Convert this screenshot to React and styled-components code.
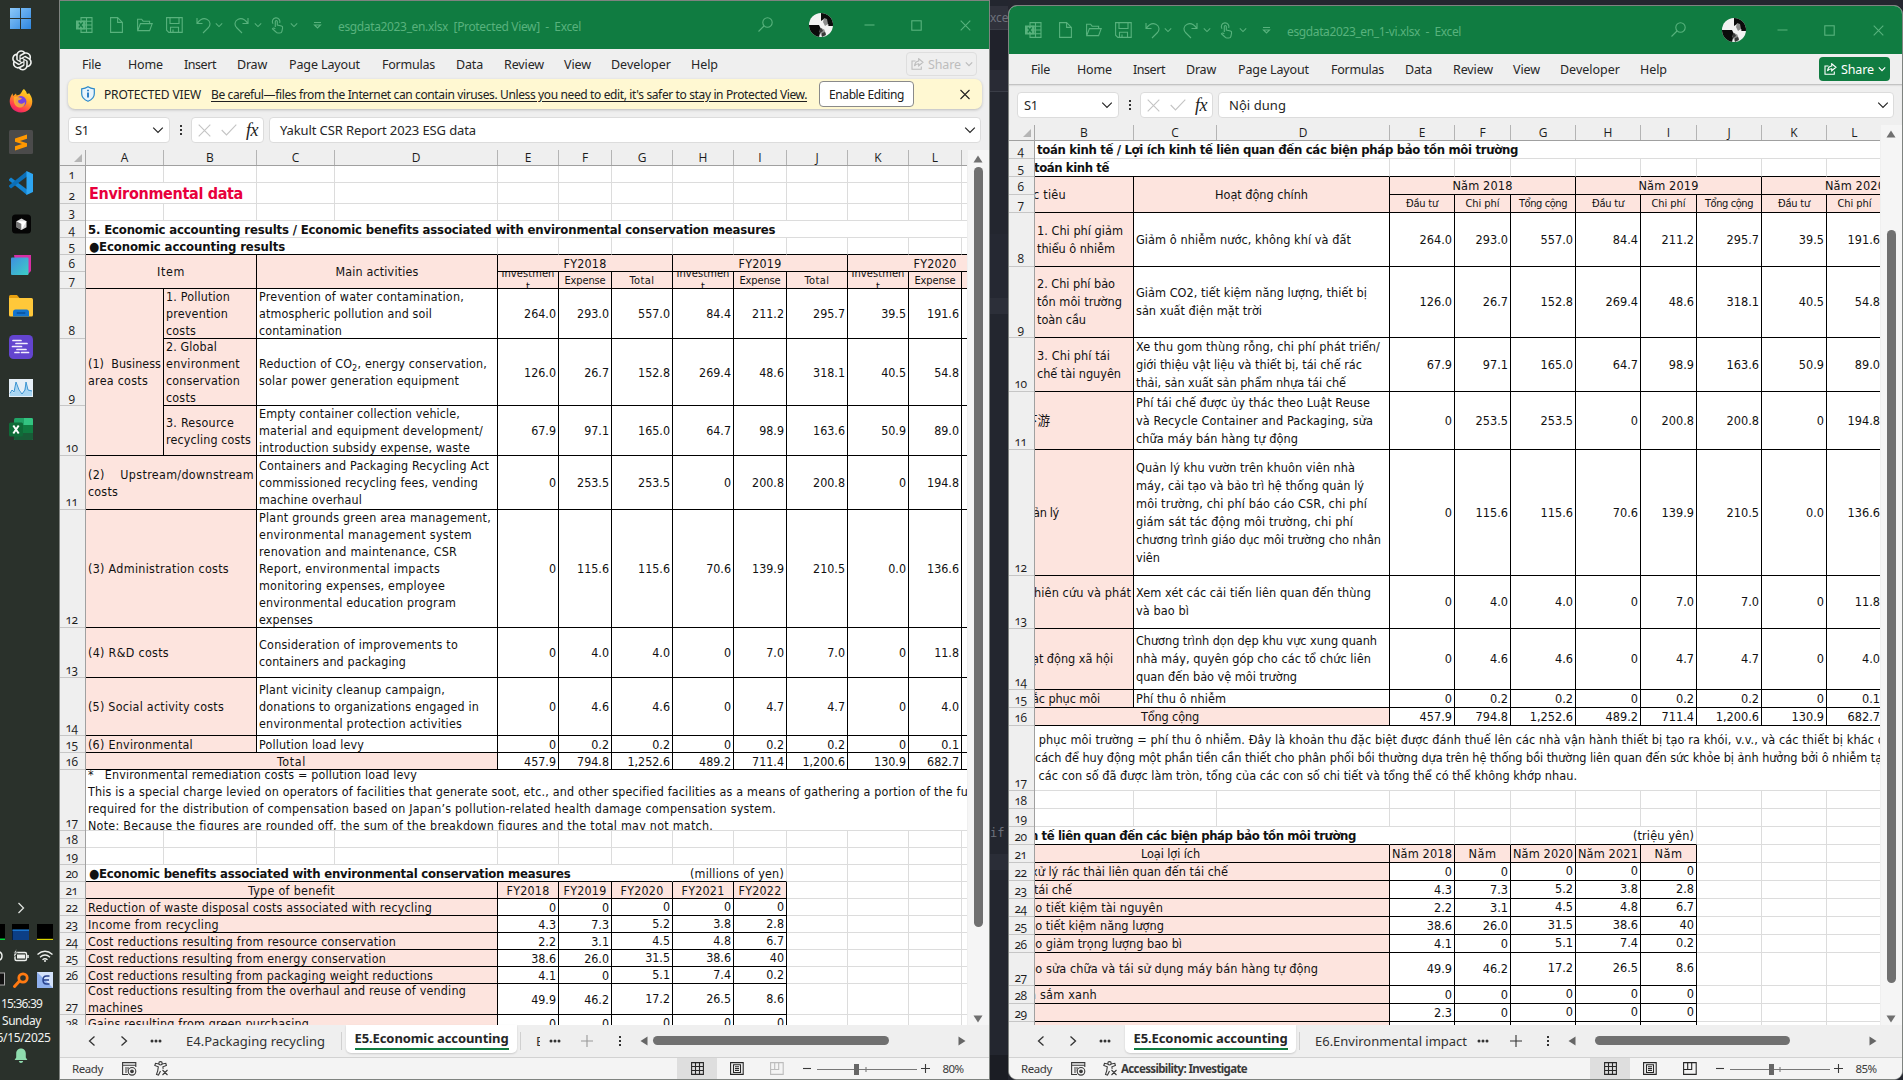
import React, { useLayoutEffect, useRef } from "react";
import styled, { createGlobalStyle, css } from "styled-components";
import { AiOutlineOpenAI } from "react-icons/ai";

const UI = '"Noto Sans", "Open Sans", sans-serif';
const SHEET = '"DejaVu Sans Condensed", "DejaVu Sans", "Noto Sans", "Noto Sans CJK SC", sans-serif';
const GREEN = "#107c41";
const PINK = "#fde4de";

const Global = createGlobalStyle`
  * { box-sizing: border-box; }
  html, body { margin: 0; padding: 0; overflow: hidden; background: #24262f; }
`;

/* ---------- Text that is tracked to a given width ---------- */
const FitSpan = styled.span`
  display: inline-block;
  white-space: pre;
  flex: none;
  text-decoration: inherit;
  text-underline-offset: inherit;
`;
function Fit({ w, children }) {
  const ref = useRef(null);
  useLayoutEffect(() => {
    const el = ref.current;
    if (!w || !el) return;
    el.style.letterSpacing = "0px";
    const n = el.textContent.length;
    const natural = el.getBoundingClientRect().width;
    const gap = (w - natural) / n;
    el.style.letterSpacing = `${gap.toFixed(3)}px`;
  }, [w, children]);
  return <FitSpan ref={ref}>{children}</FitSpan>;
}

/* ---------- Desktop ---------- */
const Desktop = styled.div`
  width: 1903px;
  height: 1080px;
  display: grid;
  grid-template-columns: 59px 931px 18px 895px;
  background: #24262f;
  overflow: hidden;
  font-family: ${UI};
`;

/* ---------- Taskbar ---------- */
const Taskbar = styled.aside`
  background: #2a312b;
  display: flex;
  flex-direction: column;
  justify-content: space-between;
  overflow: hidden;
`;
const Apps = styled.div`
  display: grid;
  grid-auto-rows: 40.95px;
  padding-left: 9px;
  margin-top: -1px;
`;
const AppSlot = styled.div`
  display: flex;
  align-items: center;
  width: 24px;
  svg { display: block; flex: none; }
`;
const Tray = styled.div`
  display: flex;
  flex-direction: column;
  height: 190px;
  color: #f1f3f1;
`;
const TrayRow = styled.div`
  height: ${(p) => p.$h}px;
  display: flex;
  align-items: center;
  justify-content: ${(p) => (p.$center ? "center" : "flex-start")};
  padding-right: ${(p) => (p.$center ? 17 : 0)}px;
  svg { display: block; flex: none; }
`;
const ClockLine = styled.div`
  height: 17px;
  line-height: 17px;
  font-size: 12px;
  display: flex;
  justify-content: center;
  width: ${(p) => p.$w || 43}px;
  white-space: nowrap;
`;

function AppIcons() {
  return (
    <Apps>
      <AppSlot>
        <svg width="24" height="24" viewBox="0 0 24 24">
          <defs>
            <linearGradient id="win" x1="0" y1="0" x2="1" y2="1">
              <stop offset="0" stopColor="#8cc9fa" />
              <stop offset="1" stopColor="#2e86e0" />
            </linearGradient>
          </defs>
          <path fill="url(#win)" d="M1 1h10v10H1zM12 1h10v10H12zM1 12h10v10H1zM12 12h10v10H12z" />
        </svg>
      </AppSlot>
      <AppSlot>
        <AiOutlineOpenAI size={26} color="#f2f4f2" />
      </AppSlot>
      <AppSlot>
        <svg width="24" height="24" viewBox="0 0 24 24">
          <defs>
            <linearGradient id="fox" x1="0.8" y1="0" x2="0.3" y2="1">
              <stop offset="0" stopColor="#ffe226" />
              <stop offset="0.45" stopColor="#ff9a1f" />
              <stop offset="0.8" stopColor="#ff3b50" />
              <stop offset="1" stopColor="#e3206e" />
            </linearGradient>
          </defs>
          <path
            fill="url(#fox)"
            d="M15 0c2 2 2.500 3.300 3 5 1-.2 1.500-.2 2-1 2 2.500 3.300 5 3.300 8.500C23.300 19 18.500 23.500 12 23.500S.7 18.500.7 12.300C.7 9 2 6.500 3.600 4.200L4 7l3-2.500.6 2C10 6 11 5.500 12 4c1-1.500 1.500-3 3-4z"
          />
          <circle cx="12" cy="12.500" r="5.400" fill="#7542e5" />
          <path fill="#ffb02e" d="M5 8c3-1 5 .5 8 1-1 2-3 2-4 2.500C9 15 13 16 16 13c0 4-3 6-6 5.500C6 18 4 13 5 8z" opacity="0.85" />
        </svg>
      </AppSlot>
      <AppSlot>
        <svg width="24" height="24" viewBox="0 0 24 24">
          <rect width="24" height="24" rx="1.500" fill="#4b4b4b" />
          <path fill="#ff9800" d="M6 8.500 18 4.500v4.200L11 11l7 2.200v3.300L6 20.500v-4.200L13 14l-7-2.300z" />
        </svg>
      </AppSlot>
      <AppSlot>
        <svg width="24" height="24" viewBox="0 0 24 24">
          <path fill="#1384d2" d="M0 8.300 2 6.600 18 18.500V24L0 9.500z" />
          <path fill="#0b6fb8" d="M0 15.700 2 17.400 18 5.500V0L0 14.500z" />
          <path fill="#2ea6f2" d="M17.500 0 24 3v18l-6.500 3z" />
        </svg>
      </AppSlot>
      <AppSlot>
        <svg width="24" height="24" viewBox="0 0 24 24">
          <rect x="3" y="2.500" width="19" height="19" rx="3.500" fill="#050505" />
          <path fill="#d8d8d8" d="m12.500 6.500 5 2.700v6l-5 2.800-5-2.800v-6z" />
          <path fill="#777" d="m7.500 9.200 5 2.600V18l-5-2.800z" />
          <path fill="#fff" d="m17.500 9.200-5 8.800v-6.200l-5-2.600z" />
        </svg>
      </AppSlot>
      <AppSlot>
        <svg width="24" height="24" viewBox="0 0 24 24">
          <defs>
            <linearGradient id="cube" x1="0" y1="0" x2="1" y2="1">
              <stop offset="0" stopColor="#3f8fe0" />
              <stop offset="1" stopColor="#3ccfc6" />
            </linearGradient>
          </defs>
          <path fill="#d62fa5" d="M5 2h17v16l-3 3H8z" />
          <rect x="2" y="4.500" width="17.500" height="17.500" rx="1" fill="url(#cube)" />
        </svg>
      </AppSlot>
      <AppSlot>
        <svg width="24" height="24" viewBox="0 0 24 24">
          <path fill="#e8a010" d="M0 2.500Q0 1 1.500 1H8l2.500 3H0z" />
          <path fill="#ffc83a" d="M0 4h22.500Q24 4 24 5.500V21q0 1.500-1.500 1.500h-21Q0 22.500 0 21z" />
          <path fill="#1374cf" d="M4 18q0-2.500 2.500-2.500h11q2.500 0 2.500 2.500v4.500H4z" />
          <rect x="7.500" y="18.300" width="9" height="1.400" rx=".7" fill="#0a4f9a" />
        </svg>
      </AppSlot>
      <AppSlot>
        <svg width="24" height="24" viewBox="0 0 24 24">
          <rect width="24" height="24" rx="4.500" fill="#6344cf" />
          <g stroke="#f3eefe" strokeWidth="1.700" strokeLinecap="round">
            <path d="M4 5.500h8M7 8.500h11M3.500 11.500h9M8 14.500h9M6 17.500h4M12.500 17.500h7" />
          </g>
        </svg>
      </AppSlot>
      <AppSlot>
        <svg width="24" height="24" viewBox="0 0 24 24">
          <rect y="3" width="24" height="18" fill="#e6eff7" />
          <path fill="#a8d5f2" d="M1 18 3 15l2 2 2-10 3 8 3 3 2-3 2-8 2 7 4 1v5H1z" />
          <path fill="none" stroke="#3b94d2" strokeWidth="1" d="M1 17.500 3 14l2 2 2-10 3 8 3 4 3-4 1-8 2 8 4 1" />
        </svg>
      </AppSlot>
      <AppSlot>
        <svg width="24" height="24" viewBox="0 0 24 24">
          <rect x="5" y="1" width="19" height="22" rx="1.500" fill="#21a366" />
          <path fill="#33c481" d="M15 1h7.500Q24 1 24 2.500V8h-9z" />
          <path fill="#107c41" d="M15 8h9v8h-9zM5 8h10v8H5z" />
          <path fill="#185c37" d="M5 16h19v5.500q0 1.500-1.500 1.500h-16Q5 23 5 21.500z" />
          <rect y="5.500" width="14" height="14" rx="1.500" fill="#0f6b38" />
          <path stroke="#fff" strokeWidth="2" d="m4.300 8.500 5.400 8M9.700 8.500l-5.400 8" />
        </svg>
      </AppSlot>
    </Apps>
  );
}

function SystemTray() {
  return (
    <Tray>
      <TrayRow $h={36} $center>
        <svg width="10" height="12" viewBox="0 0 10 12">
          <path d="m2.500 1 5 5-5 5" fill="none" stroke="#dfe3df" strokeWidth="1.300" />
        </svg>
      </TrayRow>
      <TrayRow $h={12}>
        <svg width="59" height="16" viewBox="0 0 59 16">
          <path fill="#000" d="M0 0h5v16H0zM12 0h17v16H12zM37 0h16v16H37z" />
          <path fill="#0c3f86" d="M12.500 6h16.500v10H12.500z" />
          <path fill="#1f8cf0" d="M12.500 5.500h16.500v1.200H12.500z" />
          <path fill="#00d83a" d="M0 14.500h5V16H0z" />
          <path fill="#d9d400" d="M37 14.800h16V16H37z" />
        </svg>
      </TrayRow>
      <TrayRow $h={36}>
        <svg width="59" height="16" viewBox="0 0 59 16" fill="none" stroke="#eef1ee" strokeWidth="1.400">
          <path d="M-2 3.500Q2 4 2 8t-4 4.500" />
          <rect x="15" y="4.500" width="11.500" height="8" rx="1.500" />
          <path d="M17 6.500h8v4h-8z" fill="#eef1ee" stroke="none" />
          <path d="M28 7v3" strokeWidth="1.600" />
          <path d="m16.500 1-3 4h4l-3 4" fill="#eef1ee" stroke="#2a312b" strokeWidth=".8" />
          <path d="M37.500 6.500q7.500-6.500 15 0M40 9.200q5-4.200 10 0M42.500 11.700q2.500-2 5 0" />
          <circle cx="45" cy="13" r="1" fill="#eef1ee" stroke="none" />
        </svg>
      </TrayRow>
      <TrayRow $h={12}>
        <svg width="59" height="18" viewBox="0 0 59 18">
          <rect x="-5" y="2" width="9.500" height="12" fill="#111" stroke="#aaa" />
          <circle cx="23" cy="7" r="4.200" fill="none" stroke="#ff7a12" strokeWidth="2.800" />
          <path d="m19.500 10-5 5.500" stroke="#ff7a12" strokeWidth="3" strokeLinecap="round" />
          <rect x="37" y="1" width="16" height="16" fill="#8fb0ee" />
          <path d="M37 1h16v16z" fill="#d4e2fb" />
          <path d="M49.500 5h-3q-3.500 0-3.500 4t3.500 4h3M43 9h6" fill="none" stroke="#27408c" strokeWidth="1.500" />
        </svg>
      </TrayRow>
      <TrayRow $h={9} />
      <ClockLine><Fit w={41}>15:36:39</Fit></ClockLine>
      <ClockLine><Fit w={39}>Sunday</Fit></ClockLine>
      <ClockLine $w={47}><Fit w={54}>6/15/2025</Fit></ClockLine>
      <TrayRow $h={20} $center>
        <svg width="14" height="16" viewBox="0 0 14 16">
          <path fill="#8fdcae" d="M7 .5c3 0 4.800 2.200 4.800 5v4l1.600 2.500H.6L2.200 9.500v-4c0-2.800 1.800-5 4.800-5zM4.800 13h4.400q-.4 2-2.200 2t-2.200-2z" />
        </svg>
      </TrayRow>
    </Tray>
  );
}

/* ---------- Sliver of the editor behind the windows ---------- */
const Sliver = styled.div`
  background: #23262f;
  display: flex;
  flex-direction: column;
  overflow: hidden;
  color: #6d717b;
  font-size: 12px;
`;
const Band = styled.div`
  flex: none;
  height: ${(p) => p.$h}px;
  background: ${(p) => p.$bg || "transparent"};
  line-height: ${(p) => p.$h}px;
  white-space: nowrap;
  font-family: ${(p) => (p.$mono ? '"DejaVu Sans Mono", monospace' : UI)};
  border-bottom: ${(p) => (p.$rule ? "1px solid #3a3d47" : "0")};
`;

/* ---------- Window ---------- */
const Frame = styled.section`
  height: ${(p) => (p.$inset ? 1075 : 1080)}px;
  margin-top: ${(p) => (p.$inset ? 5 : 0)}px;
  border: 1px solid #7f8380;
  border-radius: ${(p) => (p.$inset ? "9px" : "0")};
  background: #efefef;
  display: flex;
  flex-direction: column;
  overflow: hidden;
`;
const TitleBar = styled.header`
  flex: none;
  height: 48px;
  background: ${GREEN};
  color: #58b27d;
  display: flex;
  align-items: center;
  padding-left: 8px;
  svg { display: block; flex: none; }
`;
const Slot = styled.div`
  width: ${(p) => p.$w}px;
  flex: none;
  display: flex;
  justify-content: center;
  margin-left: ${(p) => p.$ml || 0}px;
`;
const Caption = styled.div`
  flex: 1;
  font-size: 12px;
  padding: 2px 0 0 0;
`;
const MenuBar = styled.nav`
  flex: none;
  height: 30px;
  display: flex;
  align-items: center;
  padding: 0 12px 0 22px;
  font-size: 12.500px;
  color: #262626;
`;
const MenuItem = styled.div`
  width: ${(p) => p.$w}px;
  flex: none;
`;
const ShareButton = styled.div`
  margin-left: auto;
  width: 71px;
  height: 24px;
  border-radius: 4px;
  display: flex;
  align-items: center;
  padding-left: 5px;
  gap: 4px;
  ${(p) =>
    p.$off
      ? css`border: 1px solid #dedede; color: #bdbdbd; padding-left: 4px;`
      : css`background: ${GREEN}; color: #fff;`}
`;
const Notice = styled.div`
  flex: none;
  height: 30px;
  margin: 0 7px 0 8px;
  border-radius: 7px;
  background: #fff8d2;
  box-shadow: 0 1px 3px rgba(0, 0, 0, 0.22);
  display: flex;
  align-items: center;
  padding: 0 9px 0 13px;
  font-size: 12px;
  color: #202020;
`;
const NoticeTitle = styled.div`
  margin: 0 10px 0 9px;
  width: 97px;
`;
const NoticeLink = styled.div`
  width: 596px;
  text-decoration: underline;
  text-underline-offset: 2px;
`;
const EnableButton = styled.div`
  width: 95px;
  height: 26px;
  margin: 0 auto 0 12px;
  background: #fff;
  border: 1px solid #8a8a8a;
  border-radius: 4px;
  display: flex;
  justify-content: center;
  align-items: center;
`;
const FormulaRow = styled.div`
  flex: none;
  height: 41px;
  padding: 8px 8px 7px 8px;
  display: flex;
  align-items: flex-start;
  font-size: 13px;
  color: #262626;
  box-shadow: ${(p) => (p.$inset ? "inset 0 2px 2px -1px rgba(0,0,0,.25)" : "none")};
`;
const Field = styled.div`
  height: 26px;
  width: ${(p) => (p.$w ? p.$w + "px" : "auto")};
  flex: ${(p) => (p.$w ? "none" : 1)};
  margin-left: ${(p) => p.$ml || 0}px;
  background: #fff;
  border: 1px solid #dcdcdc;
  border-radius: 4px;
  display: flex;
  align-items: center;
  justify-content: space-between;
  padding: 0 ${(p) => p.$pr || 5}px 0 ${(p) => p.$pl || 6}px;
`;
const Dots = styled.div`
  width: 21px;
  height: 26px;
  display: flex;
  justify-content: center;
  align-items: center;
`;
const Fx = styled.span`
  font: italic 18px "Liberation Serif", serif;
  letter-spacing: -0.5px;
  color: #222;
`;

/* ---------- Sheet ---------- */
const SheetArea = styled.div`
  flex: none;
  height: ${(p) => p.$h}px;
  display: flex;
  overflow: hidden;
`;
const Main = styled.div`
  width: ${(p) => p.$w}px;
  flex: none;
  overflow: hidden;
  display: grid;
  grid-template-columns: 26px ${(p) => p.$w - 26}px;
  grid-template-rows: 16px 1fr;
`;
const Corner = styled.div`
  border-right: 1px solid #a8a8a8;
  border-bottom: 1px solid #a0a0a0;
  display: flex;
  justify-content: flex-end;
  align-items: flex-end;
  padding: 0 3px 3px 0;
`;
const ColHeads = styled.div`
  display: grid;
  grid-template-columns: ${(p) => p.$cols};
  overflow: hidden;
  border-bottom: 1px solid #a0a0a0;
`;
const ColHead = styled.div`
  border-right: 1px solid #b4b4b4;
  font: 12px/16px "Open Sans", ${UI};
  text-align: center;
  color: #1c1c1c;
`;
const RowHeads = styled.div`
  display: grid;
  grid-template-rows: ${(p) => p.$rows};
  overflow: hidden;
  border-right: 1px solid #a0a0a0;
`;
const RowHead = styled.div`
  border-bottom: 1px solid #c6c6c6;
  display: flex;
  align-items: flex-end;
  justify-content: center;
  padding-right: 2px;
  font: 12px/15px "Open Sans", ${UI};
  font-variant-numeric: oldstyle-nums;
  letter-spacing: -0.5px;
  color: #1c1c1c;
`;
const Cells = styled.div`
  display: grid;
  grid-template-columns: ${(p) => p.$cols};
  grid-template-rows: ${(p) => p.$rows};
  overflow: hidden;
  background: #fff;
  font-family: ${SHEET};
  font-size: ${(p) => p.$fs}px;
  line-height: ${(p) => p.$lh}px;
  color: #111;
`;
const edge = { k: "#000", g: "#dcdcdc", n: "transparent" };
const CellBox = styled.div`
  grid-row: ${(p) => p.$r} / span ${(p) => p.$rs};
  grid-column: ${(p) => p.$c} / span ${(p) => p.$cs};
  min-width: 0;
  min-height: 0;
  overflow: hidden;
  display: flex;
  flex-direction: column;
  justify-content: center;
  align-items: ${(p) => ({ l: "flex-start", c: "center", r: "flex-end" })[p.$al]};
  padding: 0 2px ${(p) => p.$up || 0}px 2px;
  background: ${(p) => (p.$pink ? PINK : "#fff")};
  border-right: 1px solid ${(p) => edge[p.$eb[0]]};
  border-bottom: 1px solid ${(p) => edge[p.$eb[1]]};
  font-size: ${(p) => p.$fs || "inherit"};
  font-weight: ${(p) => (p.$bold ? 700 : 400)};
  color: ${(p) => p.$color || "inherit"};
  white-space: nowrap;
`;
const Line = styled.div`
  flex: none;
  margin-left: ${(p) => p.$x || 0}px;
  min-height: 1em;
  line-height: ${(p) => (p.$lh ? p.$lh + "px" : "inherit")};
  sub { font-size: 9px; line-height: 0; vertical-align: -3px; }
`;

/* A line is [text, width]; a plain string keeps its natural width. */
function Cell({ r, c, rs = 1, cs = 1, al = "l", pink, eb = "kk", t = [], bold, fs, lh, color, x = 0, up }) {
  return (
    <CellBox $r={r} $c={c} $rs={rs} $cs={cs} $al={al} $pink={pink} $eb={eb} $bold={bold} $fs={fs} $color={color} $up={up}>
      {t.map((l, i) => (
        <Line key={i} $x={x} $lh={lh}>
          {Array.isArray(l) ? <Fit w={l[1]}>{l[0]}</Fit> : l}
        </Line>
      ))}
    </CellBox>
  );
}

const px = (a) => a.map((n) => n + "px").join(" ");

const VScroll = styled.div`
  flex: 1;
  margin-left: 1px;
  background: #f5f5f5;
  display: flex;
  flex-direction: column;
  align-items: center;
  padding: 5px 1px 2px 0;
  svg { flex: none; display: block; }
  svg:last-child { margin-top: auto; }
`;
const VThumb = styled.div`
  flex: none;
  width: 9px;
  margin-top: ${(p) => p.$mt}px;
  height: ${(p) => p.$h}px;
  border-radius: 5px;
  background: #707070;
`;

function Sheet({ data, areaHeight, width, thumb }) {
  const { letters, cols, rows, firstRow, cells, fs, lh, ebFor } = data;
  const taken = new Set();
  cells.forEach(({ r, c, rs = 1, cs = 1 }) => {
    for (let i = r; i < r + rs; i++) for (let j = c; j < c + cs; j++) taken.add(i + ":" + j);
  });
  const blanks = [];
  rows.forEach((_, i) =>
    cols.forEach((__, j) => {
      if (!taken.has(i + 1 + ":" + (j + 1))) blanks.push([i + 1, j + 1]);
    })
  );
  return (
    <SheetArea $h={areaHeight}>
      <Main $w={width}>
        <Corner>
          <svg width="8" height="8"><path d="M8 0v8H0z" fill="#b5b5b5" /></svg>
        </Corner>
        <ColHeads $cols={px(cols)}>
          {letters.map((l, i) => <ColHead key={i}>{l}</ColHead>)}
        </ColHeads>
        <RowHeads $rows={px(rows)}>
          {rows.map((_, i) => <RowHead key={i}>{firstRow + i}</RowHead>)}
        </RowHeads>
        <Cells $cols={px(cols)} $rows={px(rows)} $fs={fs} $lh={lh}>
          {blanks.map(([r, c]) => <Cell key={r + "-" + c} r={r} c={c} eb={ebFor(r, c)} />)}
          {cells.map((o, i) => <Cell key={i} {...o} />)}
        </Cells>
      </Main>
      <VScroll>
        <svg width="10" height="8"><path d="M5 .5 9.500 7.500H.5z" fill="#707070" /></svg>
        <VThumb $mt={thumb[0]} $h={thumb[1]} />
        <svg width="10" height="8"><path d="M5 7.500 9.500.5H.5z" fill="#707070" /></svg>
      </VScroll>
    </SheetArea>
  );
}

/* ---------- Sheet tabs and status bar ---------- */
const TabBar = styled.div`
  flex: none;
  height: 32px;
  display: flex;
  align-items: flex-start;
  font-size: 13px;
  color: #333;
`;
const TabSlot = styled.div`
  flex: none;
  width: ${(p) => p.$w}px;
  height: ${(p) => (p.$h || 31)}px;
  display: flex;
  align-items: center;
  justify-content: ${(p) => (p.$left ? "flex-start" : "center")};
  overflow: hidden;
  svg { display: block; }
`;
const ActiveTab = styled.div`
  flex: none;
  width: 171px;
  height: 28px;
  background: #fff;
  border-radius: 0 0 5px 5px;
  box-shadow: 0 1px 2px rgba(0, 0, 0, 0.15);
  display: flex;
  justify-content: center;
  padding-top: 3px;
`;
const ActiveLabel = styled.div`
  height: 22px;
  line-height: 20px;
  border-bottom: 2px solid ${GREEN};
  font-weight: 700;
  color: #262626;
`;
const Rule = styled.div`
  flex: none;
  width: 1px;
  height: 18px;
  margin: 7px ${(p) => p.$mr}px 0 ${(p) => p.$ml}px;
  background: #d0d0d0;
`;
const HTrack = styled.div`
  flex: none;
  width: ${(p) => p.$w}px;
  height: 31px;
  display: flex;
  align-items: center;
  justify-content: space-between;
`;
const HThumb = styled.div`
  width: ${(p) => p.$w}px;
  height: 9px;
  border-radius: 5px;
  background: #707070;
  margin: 0 auto 0 ${(p) => p.$ml}px;
`;
const StatusBar = styled.footer`
  flex: 1;
  border-top: 1px solid #d2d2d2;
  background: #f4f4f4;
  display: flex;
  align-items: center;
  font-size: 11.500px;
  color: #3a3a3a;
  padding-left: 12px;
  svg { display: block; }
`;
const StatusItem = styled.div`
  flex: none;
  width: ${(p) => p.$w}px;
  display: flex;
  font-weight: ${(p) => (p.$bold ? 700 : 400)};
`;
const ViewButton = styled.div`
  width: 40px;
  height: 100%;
  display: flex;
  align-items: center;
  justify-content: center;
  background: ${(p) => (p.$on ? "#dedede" : "transparent")};
  color: ${(p) => (p.$off ? "#bcbcbc" : "#262626")};
`;
const Views = styled.div`
  margin-left: auto;
  height: 100%;
  display: flex;
  align-items: center;
  padding-right: 17px;
`;

/* ---------- Icons ---------- */
const S = ({ w = 16, h = 16, vb, children, sw = 1.1 }) => (
  <svg width={w} height={h} viewBox={vb || `0 0 ${w} ${h}`} fill="none" stroke="currentColor" strokeWidth={sw}>
    {children}
  </svg>
);
const Chevron = ({ w = 8, sw = 1.3 }) => (
  <S w={w} h={w} vb="0 0 10 10" sw={sw}><path d="m1 3 4 4 4-4" /></S>
);
const XlIcon = () => (
  <S w={17} h={16}>
    <path d="M5 3.500V.6h11v14.800H5V12M5 4.300h11M5 8h11M5 11.700h11M10.500.6v14.800" />
    <path d="M.5 4h8.500v8H.5z" fill="currentColor" />
    <path d="m2.800 5.500 4 5M6.800 5.500l-4 5" stroke={GREEN} strokeWidth="1.300" />
  </S>
);
const NewIcon = () => <S w={13} h={16}><path d="M.6.6h7l4.800 4.800v10H.6zM7.600.6v4.800h4.800" /></S>;
const OpenIcon = () => <S w={16} h={14}><path d="M.6 12.500V1.200h4l1.500 2h6.500v2.300M.8 12.600l2.600-7h11.800l-2.600 7z" /></S>;
const SaveIcon = () => <S w={17} h={16}><path d="M.6.6h15.600v14.800H2.800L.6 13.200zM4 .8v5.700h9V.8M4.500 15.200v-5h8v5M7 12.500v2.700" /></S>;
const UndoIcon = ({ flip }) => (
  <S w={15} h={17}>
    <g transform={flip ? "translate(15 0) scale(-1 1)" : undefined}>
      <path d="M1 1v5.500h5.500M1.200 6.300C4 2.500 7.500.8 10.800 2.200c3.700 1.600 4 5.700 1.700 8.300L7 16" />
    </g>
  </S>
);
const TouchIcon = () => (
  <S w={13} h={17}>
    <path d="M4.300 10V4.500q0-1 1-1t1 1V8l4.200 1q1.300.4 1.100 1.800l-.7 3.500q-.3 1.700-2 1.700H6.800q-1 0-1.800-1L1.500 11.800q1-1.500 2.800 0M2 6.800A3.800 3.800 0 1 1 8.700 6" />
  </S>
);
const CustomIcon = () => <S w={9} h={9}><path d="M1 1.500h7M1.500 4l3 3 3-3z" /></S>;
const SearchIcon = () => <S w={15} h={16}><circle cx="9.500" cy="5.500" r="4.700" /><path d="m6 9-5.500 5.500" /></S>;
const CloseIcon = () => <S w={11} h={11}><path d="m.7.7 9.600 9.600M10.300.7.7 10.300" /></S>;
const MaxIcon = () => <S w={11} h={11}><rect x=".8" y=".8" width="9.400" height="9.400" /></S>;
const MinIcon = () => <S w={11} h={11}><path d="M.5 5h10" /></S>;
const ShareIcon = () => <S w={13} h={12}><path d="M4.500 3H1v8.300h9.300V8.500M7.700.8 12 4.300 7.700 7.800V5.700Q4.800 5.600 3.500 8 4 3.400 7.700 3z" /></S>;
const Avatar = () => (
  <svg width="24" height="24" viewBox="0 0 24 24">
    <defs><clipPath id="av"><circle cx="12" cy="12" r="12" /></clipPath></defs>
    <g clipPath="url(#av)">
      <rect width="24" height="24" fill="#f3f3f3" />
      <path fill="#0b0b0b" d="M12 0h12v13H12zM0 12h10l2 4-2 8H0z" />
      <path fill="#f3f3f3" d="m12 8 3-2 2 4 3 2-4 3-4-2z" />
      <path fill="#8d8d8d" d="m15 5 3 1 1 5-3 2-2-4zM10 18l5-2 2 5-4 3z" />
      <path fill="#3a3a3a" d="m10 17 3-2 1 3-3 2zM13 20l3-1 1 3-4 2z" />
    </g>
  </svg>
);
const Shield = () => (
  <S w={14} h={16} sw={1.2}>
    <path d="M7 .8q2.500 1.800 6.300 2v5q0 5-6.300 7.500Q.7 12.800.7 7.800v-5Q4.500 2.600 7 .8z" stroke="#2b88c9" fill="#e8f4fc" />
    <path d="M7 6.500v5M7 3.700v1.600" stroke="#0f6cbd" strokeWidth="1.700" />
  </S>
);
const Ellipsis = () => <svg width="12" height="4"><g fill="#333"><circle cx="2" cy="2" r="1.500" /><circle cx="6" cy="2" r="1.500" /><circle cx="10" cy="2" r="1.500" /></g></svg>;
const VDots = () => <svg width="4" height="12"><path fill="#333" d="M1 1h2v2H1zM1 5h2v2H1zM1 9h2v2H1z" /></svg>;
const Arrow = ({ flip }) => <svg width="8" height="10"><path fill="#666" d={flip ? "M.5.5v9l7-4.500z" : "M7.500.5v9L.5 5z"} /></svg>;
const SheetNav = ({ flip }) => <S w={8} h={12} sw={1.3}><path d={flip ? "m1.500 1.500 5 4.500-5 4.500" : "m6.500 1.500-5 4.500 5 4.500"} /></S>;
const MacroIcon = () => (
  <S w={15} h={14}>
    <path d="M6 12.500H.6V.6h13.200V5M.6 3.300h13.200M3 6h4M3 8h2.500M3 10h2" />
    <circle cx="10" cy="9.300" r="3.800" /><circle cx="10" cy="9.300" r="1.300" fill="currentColor" />
  </S>
);
const AccessIcon = () => (
  <S w={15} h={15}>
    <circle cx="6.500" cy="2.300" r="1.700" />
    <path d="M5 3 1.500 2.300.8 4.500l3.500 1.300-.6 4-1.200 3.600 2 .7 2-4M8 3l3.800-.7.6 2.200-3.500 1.300.3 2M8.500 9l5 5M13.500 9l-5 5" />
  </S>
);
const GridIcon = () => <S w={13} h={13}><path d="M.6.6h11.800v11.800H.6zM.6 4.500h11.800M.6 8.500h11.800M4.500.6v11.800M8.500.6v11.800" /></S>;
const PageIcon = () => <S w={14} h={13}><path d="M.6.6h12.600v11.800H.6zM3.500 2.800h7v7.700h-7zM5 4.800h4M5 6.600h4M5 8.500h4" /></S>;
const BreakIcon = () => <S w={14} h={13}><path d="M.6.6h12.600v11.800H.6zM4.700.6v6.900h4V.6M.6 7.500h4" /></S>;
const Slider = ({ knob, tick }) => (
  <S w={100} h={12}>
    <path d="M0 6.500h100" stroke="#777" /><path d={`M${tick} 4v5`} stroke="#777" />
    <rect x={knob} y="1" width="5" height="11" fill="#666" stroke="none" />
  </S>
);

/* ---------- Data shared by both workbooks ---------- */
const numsA = [
  ["264.0", "293.0", "557.0", "84.4", "211.2", "295.7", "39.5", "191.6"],
  ["126.0", "26.7", "152.8", "269.4", "48.6", "318.1", "40.5", "54.8"],
  ["67.9", "97.1", "165.0", "64.7", "98.9", "163.6", "50.9", "89.0"],
  ["0", "253.5", "253.5", "0", "200.8", "200.8", "0", "194.8"],
  ["0", "115.6", "115.6", "70.6", "139.9", "210.5", "0.0", "136.6"],
  ["0", "4.0", "4.0", "0", "7.0", "7.0", "0", "11.8"],
  ["0", "4.6", "4.6", "0", "4.7", "4.7", "0", "4.0"],
  ["0", "0.2", "0.2", "0", "0.2", "0.2", "0", "0.1"],
  ["457.9", "794.8", "1,252.6", "489.2", "711.4", "1,200.6", "130.9", "682.7"],
];
const benefits = [
  ["0", "0", "0", "0", "0"],
  ["4.3", "7.3", "5.2", "3.8", "2.8"],
  ["2.2", "3.1", "4.5", "4.8", "6.7"],
  ["38.6", "26.0", "31.5", "38.6", "40"],
  ["4.1", "0", "5.1", "7.4", "0.2"],
  ["49.9", "46.2", "17.2", "26.5", "8.6"],
  ["0", "0", "0", "0", "0"],
  ["2.3", "0", "0", "0", "0"],
  ["", "", "", "", ""],
];
const numberCells = (table, r0, c0) =>
  table.flatMap((row, i) => row.map((v, j) => ({ r: r0 + i, c: c0 + j, al: "r", t: [v] })));
const benefitCells = (n, r0, c0) =>
  benefits.slice(0, n).flatMap((row, i) => row.map((v, j) => ({ r: r0 + i, c: c0 + j, al: "r", t: [v], up: j > 1 ? 2 : 0 })));

/* ---------- English workbook ---------- */
const left = {
  letters: ["A", "B", "C", "D", "E", "F", "G", "H", "I", "J", "K", "L", ""],
  cols: [78, 93, 78, 163, 61, 53, 61, 61, 53, 61, 61, 53, 61],
  rows: [17, 21, 17, 17, 17, 17, 17, 50, 67, 50, 54, 118, 50, 58, 17, 17, 61, 17, 17, 17, 17, 17, 17, 17, 17, 17, 31, 17],
  firstRow: 1,
  fs: 12.4,
  lh: 17,
  ebFor: (r) => (r === 5 ? "gk" : "gg"),
  cells: [
    { r: 2, c: 1, cs: 2, eb: "gg", t: [["Environmental data", 154]], bold: true, fs: "16px", color: "#e8003c", x: 1 },
    { r: 4, c: 1, cs: 13, eb: "gg", t: [["5. Economic accounting results / Economic benefits associated with environmental conservation measures", 687]], bold: true, fs: "13px" },
    { r: 5, c: 1, cs: 4, eb: "gk", t: [["●Economic accounting results", 196]], bold: true, fs: "13px", x: 1 },
    { r: 6, c: 1, rs: 2, cs: 2, al: "c", pink: true, t: [["Item", 28]] },
    { r: 6, c: 3, rs: 2, cs: 2, al: "c", pink: true, t: [["Main activities", 83]] },
    ...["FY2018", "FY2019", "FY2020"].map((f, i) => ({ r: 6, c: 5 + i * 3, cs: 3, al: "c", pink: true, t: [[f, 43]] })),
    ...[5, 8, 11].flatMap((c) => [
      { r: 7, c, al: "c", pink: true, fs: "11px", lh: 13, t: [["Investmen", 53], "t"] },
      { r: 7, c: c + 1, al: "c", pink: true, fs: "11px", t: [["Expense", 41]] },
    ]),
    ...[7, 10].map((c) => ({ r: 7, c, al: "c", pink: true, fs: "11px", t: [["Total", 25]] })),
    { r: 7, c: 13, pink: true, t: [] },
    { r: 8, c: 1, rs: 3, pink: true, t: [["(1)  Business", 73], ["area costs", 60]] },
    { r: 8, c: 2, pink: true, t: [["1. Pollution", 64], ["prevention", 62], ["costs", 30]] },
    { r: 9, c: 2, pink: true, t: [["2. Global", 51], ["environment", 74], ["conservation", 74], ["costs", 30]] },
    { r: 10, c: 2, pink: true, t: [["3. Resource", 68], ["recycling costs", 85]] },
    { r: 8, c: 3, cs: 2, t: [["Prevention of water contamination,", 205], ["atmospheric pollution and soil", 173], ["contamination", 83]] },
    { r: 9, c: 3, cs: 2, t: [[<>Reduction of CO<sub>2</sub>, energy conservation,</>, 228], ["solar power generation equipment", 200]] },
    { r: 10, c: 3, cs: 2, t: [["Empty container collection vehicle,", 201], ["material and equipment development/", 224], ["introduction subsidy expense, waste", 211]] },
    { r: 11, c: 1, cs: 2, pink: true, t: [["(2)    Upstream/downstream", 166], ["costs", 30]] },
    { r: 11, c: 3, cs: 2, t: [["Containers and Packaging Recycling Act", 230], ["commissioned recycling fees, vending", 219], ["machine overhaul", 103]] },
    { r: 12, c: 1, cs: 2, pink: true, t: [["(3) Administration costs", 141]] },
    { r: 12, c: 3, cs: 2, t: [["Plant grounds green area management,", 232], ["environmental management system", 213], ["renovation and maintenance, CSR", 198], ["Report, environmental impacts", 181], ["monitoring expenses, employee", 186], ["environmental education program", 197], ["expenses", 54]] },
    { r: 13, c: 1, cs: 2, pink: true, t: [["(4) R&D costs", 81]] },
    { r: 13, c: 3, cs: 2, t: [["Consideration of improvements to", 199], ["containers and packaging", 147]] },
    { r: 14, c: 1, cs: 2, pink: true, t: [["(5) Social activity costs", 136]] },
    { r: 14, c: 3, cs: 2, t: [["Plant vicinity cleanup campaign,", 186], ["donations to organizations engaged in", 220], ["environmental protection activities", 203]] },
    { r: 15, c: 1, cs: 2, pink: true, t: [["(6) Environmental", 105]] },
    { r: 15, c: 3, cs: 2, t: [["Pollution load levy", 105]] },
    { r: 16, c: 1, cs: 4, al: "c", pink: true, t: [["Total", 29]] },
    ...numberCells(numsA, 8, 5),
    ...numsA.map((_, i) => ({ r: 8 + i, c: 13, t: [] })),
    { r: 17, c: 1, cs: 13, eb: "gg", t: [["*   Environmental remediation costs = pollution load levy", 329], ["This is a special charge levied on operators of facilities that generate soot, etc., and other specified facilities as a means of gathering a portion of the fu", 880], ["required for the distribution of compensation based on Japan’s pollution-related health damage compensation system.", 688], ["Note: Because the figures are rounded off, the sum of the breakdown figures and the total may not match.", 625]] },
    { r: 20, c: 1, cs: 7, eb: "nk", t: [["●Economic benefits associated with environmental conservation measures", 481]], bold: true, fs: "13px", x: 1 },
    { r: 20, c: 8, cs: 2, eb: "gk", al: "r", t: [["(millions of yen)", 94]] },
    { r: 21, c: 1, cs: 4, al: "c", pink: true, t: [["Type of benefit", 87]] },
    ...[2018, 2019, 2020, 2021, 2022].map((y, i) => ({ r: 21, c: 5 + i, al: "c", pink: true, t: [["FY" + y, 43]] })),
    ...[
      [["Reduction of waste disposal costs associated with recycling", 344]],
      [["Income from recycling", 131]],
      [["Cost reductions resulting from resource conservation", 308]],
      [["Cost reductions resulting from energy conservation", 298]],
      [["Cost reductions resulting from packaging weight reductions", 345]],
      [["Cost reductions resulting from the overhaul and reuse of vending", 378], ["machines", 55]],
      [["Gains resulting from green purchasing", 221]],
    ].map((t, i) => ({ r: 22 + i, c: 1, cs: 4, pink: true, t })),
    ...benefitCells(7, 22, 5),
  ],
};

/* ---------- Vietnamese workbook ---------- */
const right = {
  letters: ["B", "C", "D", "E", "F", "G", "H", "I", "J", "K", "L"],
  cols: [99, 83, 173, 65, 56, 65, 65, 56, 65, 65, 56],
  rows: [18, 18, 18, 18, 54, 71, 54, 58, 126, 53, 61, 18, 18, 65, 18, 18, 18, 18, 18, 18, 18, 18, 18, 33, 18, 18, 18],
  firstRow: 4,
  fs: 12.6,
  lh: 18,
  ebFor: (r) => (r === 2 ? "gk" : "gg"),
  cells: [
    { r: 1, c: 1, cs: 11, eb: "gg", bold: true, fs: "13px", t: [["toán kinh tế / Lợi ích kinh tế liên quan đến các biện pháp bảo tồn môi trường", 481]] },
    { r: 2, c: 1, cs: 3, eb: "gk", bold: true, fs: "13px", x: -3, t: [["toán kinh tế", 75]] },
    { r: 3, c: 1, rs: 2, pink: true, x: -4, t: [["c tiêu", 33]] },
    { r: 3, c: 2, rs: 2, cs: 2, al: "c", pink: true, t: [["Hoạt động chính", 93]] },
    { r: 3, c: 4, cs: 3, al: "c", pink: true, t: [["Năm 2018", 60]] },
    { r: 3, c: 7, cs: 3, al: "c", pink: true, t: [["Năm 2019", 60]] },
    { r: 3, c: 10, cs: 2, pink: true, x: 61, t: [["Năm 2020", 60]] },
    ...[4, 7].flatMap((c) => [
      { r: 4, c, al: "c", pink: true, fs: "11px", t: [["Đầu tư", 32]] },
      { r: 4, c: c + 1, al: "c", pink: true, fs: "11px", t: [["Chi phí", 34]] },
      { r: 4, c: c + 2, al: "c", pink: true, fs: "11px", t: [["Tổng cộng", 48]] },
    ]),
    { r: 4, c: 10, al: "c", pink: true, fs: "11px", t: [["Đầu tư", 32]] },
    { r: 4, c: 11, al: "c", pink: true, fs: "11px", t: [["Chi phí", 34]] },
    { r: 5, c: 1, pink: true, t: [["1. Chi phí giảm", 86], ["thiểu ô nhiễm", 78]] },
    { r: 6, c: 1, pink: true, t: [["2. Chi phí bảo", 78], ["tồn môi trường", 85], ["toàn cầu", 49]] },
    { r: 7, c: 1, pink: true, t: [["3. Chi phí tái", 73], ["chế tài nguyên", 84]] },
    { r: 8, c: 1, pink: true, x: -12, t: [["下游", 25]] },
    { r: 9, c: 1, pink: true, x: -4, t: [["ản lý", 26]] },
    { r: 10, c: 1, pink: true, x: -3, t: [["hiên cứu và phát", 97], "\u00a0"] },
    { r: 11, c: 1, pink: true, x: -5, t: [["ạt động xã hội", 81]] },
    { r: 12, c: 1, pink: true, x: -5, t: [["ắc phục môi", 68]] },
    { r: 5, c: 2, cs: 2, t: [["Giảm ô nhiễm nước, không khí và đất", 215]] },
    { r: 6, c: 2, cs: 2, t: [["Giảm CO2, tiết kiệm năng lượng, thiết bị", 231], ["sản xuất điện mặt trời", 126]] },
    { r: 7, c: 2, cs: 2, t: [["Xe thu gom thùng rỗng, chi phí phát triển/", 244], ["giới thiệu vật liệu và thiết bị, tái chế rác", 226], ["thải, sản xuất sản phẩm nhựa tái chế", 210]] },
    { r: 8, c: 2, cs: 2, t: [["Phí tái chế được ủy thác theo Luật Reuse", 234], ["và Recycle Container and Packaging, sửa", 237], ["chữa máy bán hàng tự động", 162]] },
    { r: 9, c: 2, cs: 2, t: [["Quản lý khu vườn trên khuôn viên nhà", 219], ["máy, cải tạo và bảo trì hệ thống quản lý", 228], ["môi trường, chi phí báo cáo CSR, chi phí", 231], ["giám sát tác động môi trường, chi phí", 217], ["chương trình giáo dục môi trường cho nhân", 245], ["viên", 24]] },
    { r: 10, c: 2, cs: 2, t: [["Xem xét các cải tiến liên quan đến thùng", 235], ["và bao bì", 53]] },
    { r: 11, c: 2, cs: 2, t: [["Chương trình dọn dẹp khu vực xung quanh", 241], ["nhà máy, quyên góp cho các tổ chức liên", 235], ["quan đến bảo vệ môi trường", 161]] },
    { r: 12, c: 2, cs: 2, t: [["Phí thu ô nhiễm", 90]] },
    { r: 13, c: 1, cs: 3, pink: true, x: 104, t: [["Tổng cộng", 58]] },
    ...numberCells(numsA, 5, 4),
    { r: 14, c: 1, cs: 11, eb: "gg", t: [[" phục môi trường = phí thu ô nhiễm. Đây là khoản thu đặc biệt được đánh thuế lên các nhà vận hành thiết bị tạo ra khói, v.v., và các thiết bị khác đ", 850], ["cách để huy động một phần tiền cần thiết cho phân phối bồi thường dựa trên hệ thống bồi thường liên quan đến sức khỏe bị ảnh hưởng bởi ô nhiễm tạ", 847], [" các con số đã được làm tròn, tổng của các con số chi tiết và tổng thể có thể không khớp nhau.", 542]], x: -2 },
    { r: 17, c: 1, cs: 3, eb: "nk", bold: true, fs: "13px", x: -7, t: [["n tế liên quan đến các biện pháp bảo tồn môi trường", 326]] },
    ...[4, 5, 6].map((c) => ({ r: 17, c, eb: "gk", t: [] })),
    { r: 17, c: 7, cs: 2, eb: "gk", al: "r", t: [["(triệu yên)", 61]] },
    { r: 18, c: 1, cs: 3, pink: true, x: 104, t: [["Loại lợi ích", 59]] },
    ...[["Năm 2018", 60], ["Năm", 28], ["Năm 2020", 60], ["Năm 2021", 60], ["Năm", 28]].map((t, i) => ({ r: 18, c: 4 + i, al: "c", pink: true, t: [t] })),
    ...[
      ["xử lý rác thải liên quan đến tái chế", 197, -6],
      ["tái chế", 38, -3],
      ["do tiết kiệm tài nguyên", 135, -9],
      ["do tiết kiệm năng lượng", 136, -9],
      ["do giảm trọng lượng bao bì", 154, -9],
      ["do sửa chữa và tái sử dụng máy bán hàng tự động", 290, -9],
      ["a sắm xanh", 68, -8],
      ["", 0, 0],
      ["", 0, 0],
    ].map(([s, w, x], i) => ({ r: 19 + i, c: 1, cs: 3, pink: true, x, t: s ? [[s, w]] : [] })),
    ...benefitCells(9, 19, 4),
  ],
};

/* ---------- Window ---------- */
const MENU = [["File", 46, 19], ["Home", 56, 35], ["Insert", 53, 32], ["Draw", 52, 30], ["Page Layout", 93, 71], ["Formulas", 74, 53], ["Data", 48, 27], ["Review", 60, 40], ["View", 47, 27], ["Developer", 80, 60], ["Help", 40, 27]];

function Excel({ inset, title, titleW, formula, formulaW, data, mainW, areaH, thumb, zoom, slider, tabs, access, shareOff, breakOff }) {
  return (
    <Frame $inset={inset}>
      <TitleBar>
        <Slot $w={32}><XlIcon /></Slot>
        <Slot $w={32}><NewIcon /></Slot>
        <Slot $w={25}><OpenIcon /></Slot>
        <Slot $w={34}><SaveIcon /></Slot>
        <Slot $w={24}><UndoIcon /></Slot>
        <Slot $w={8}><Chevron /></Slot>
        <Slot $w={25} $ml={6}><UndoIcon flip /></Slot>
        <Slot $w={8}><Chevron /></Slot>
        <Slot $w={30}><TouchIcon /></Slot>
        <Slot $w={4}><Chevron /></Slot>
        <Slot $w={42}><CustomIcon /></Slot>
        <Caption><Fit w={titleW}>{title}</Fit></Caption>
        <Slot $w={62}><SearchIcon /></Slot>
        <Slot $w={50}><Avatar /></Slot>
        <Slot $w={46}><MinIcon /></Slot>
        <Slot $w={49}><MaxIcon /></Slot>
        <Slot $w={48}><CloseIcon /></Slot>
      </TitleBar>
      <MenuBar>
        {MENU.map(([m, w, t]) => <MenuItem key={m} $w={w}><Fit w={t}>{m}</Fit></MenuItem>)}
        <ShareButton $off={shareOff}><ShareIcon /><Fit w={33}>Share</Fit><Chevron sw={1.6} /></ShareButton>
      </MenuBar>
      {!inset && (
        <Notice>
          <Shield />
          <NoticeTitle><Fit w={97}>PROTECTED VIEW</Fit></NoticeTitle>
          <NoticeLink><Fit w={596}>Be careful—files from the Internet can contain viruses. Unless you need to edit, it's safer to stay in Protected View.</Fit></NoticeLink>
          <EnableButton><Fit w={75}>Enable Editing</Fit></EnableButton>
          <S w={14} h={11}><path d="m1.500 1 9 9M10.500 1l-9 9" /></S>
        </Notice>
      )}
      <FormulaRow $inset={inset}>
        <Field $w={102}><Fit w={14}>S1</Fit><Chevron w={12} sw={1} /></Field>
        <Dots><VDots /></Dots>
        <Field $w={73}>
          <S w={13} h={13}><path d="m.7.7 11.600 11.600M12.300.7.7 12.300" stroke="#c4c4c4" /></S>
          <S w={16} h={12}><path d="m.7 6 4.800 5L15.300.7" stroke="#c4c4c4" /></S>
          <Fx>fx</Fx>
        </Field>
        <Field $ml={5} $pl={10} $pr={4}><Fit w={formulaW}>{formula}</Fit><Chevron w={12} sw={1} /></Field>
      </FormulaRow>
      <Sheet data={data} areaHeight={areaH} width={mainW} thumb={thumb} />
      <TabBar>{tabs}</TabBar>
      <StatusBar>
        <StatusItem $w={50}><Fit w={31}>Ready</Fit></StatusItem>
        <StatusItem $w={32}><MacroIcon /></StatusItem>
        <StatusItem $w={18}><AccessIcon /></StatusItem>
        {access && <StatusItem $w={130} $bold><Fit w={126}>Accessibility: Investigate</Fit></StatusItem>}
        <Views>
          <ViewButton $on><GridIcon /></ViewButton>
          <ViewButton><PageIcon /></ViewButton>
          <ViewButton $off={breakOff}><BreakIcon /></ViewButton>
          <Slot $w={20}><S w={8} h={9}><path d="M0 4.500h8" /></S></Slot>
          <Slot $w={100}><Slider {...slider} /></Slot>
          <Slot $w={17}><S w={9} h={9}><path d="M0 4.500h9M4.500 0v9" /></S></Slot>
          <Slot $w={38}><Fit w={21}>{zoom}</Fit></Slot>
        </Views>
      </StatusBar>
    </Frame>
  );
}
const Nav = () => (
  <>
    <TabSlot $w={16} />
    <TabSlot $w={32}><SheetNav /></TabSlot>
    <TabSlot $w={32}><SheetNav flip /></TabSlot>
    <TabSlot $w={31}><Ellipsis /></TabSlot>
  </>
);
const Plus = ({ faint }) => <S w={12} h={12}><path d="M0 6h12M6 0v12" stroke={faint ? "#999" : "#333"} /></S>;

export default function App() {
  return (
    <>
      <Global />
      <Desktop>
        <Taskbar>
          <AppIcons />
          <SystemTray />
        </Taskbar>
        <Excel
          title="esgdata2023_en.xlsx  [Protected View]  -  Excel"
          titleW={243}
          formula="Yakult CSR Report 2023 ESG data"
          formulaW={196}
          data={left}
          mainW={907}
          areaH={875}
          thumb={[4, 760]}
          zoom="80%"
          slider={{ knob: 37, tick: 49 }}
          shareOff
          breakOff
          tabs={
            <>
              <Nav />
              <TabSlot $w={169} $h={32}><Fit w={139}>E4.Packaging recycling</Fit></TabSlot>
              <Rule $ml={1} $mr={4} />
              <ActiveTab><ActiveLabel><Fit w={154}>E5.Economic accounting</Fit></ActiveLabel></ActiveTab>
              <Rule $ml={3} $mr={15} />
              <TabSlot $w={4} $h={32} $left>E</TabSlot>
              <TabSlot $w={29}><Ellipsis /></TabSlot>
              <TabSlot $w={35}><Plus faint /></TabSlot>
              <TabSlot $w={32}><VDots /></TabSlot>
              <TabSlot $w={4} />
              <HTrack $w={326}><Arrow /><HThumb $w={236} $ml={5} /><Arrow flip /></HTrack>
            </>
          }
        />
        <Sliver>
          <Band $h={6} />
          <Band $h={24} $bg="#30323c" $rule>xce</Band>
          <Band $h={40} $bg="#20222b" />
          <Band $h={22} $bg="#292b35" $rule />
          <Band $h={142} />
          <Band $h={64} $bg="#252832" />
          <Band $h={16} $bg="#2c2f39" />
          <Band $h={510} />
          <Band $h={18} $mono>if</Band>
          <Band $h={12} />
          <Band $h={16} $bg="#2a2d37" />
          <Band $h={185} />
          <Band $h={25} $bg="#1b1d24" />
        </Sliver>
        <Excel
          inset
          title="esgdata2023_en_1-vi.xlsx  -  Excel"
          titleW={174}
          formula="Nội dung"
          formulaW={57}
          data={right}
          mainW={871}
          areaH={900}
          thumb={[92, 753]}
          zoom="85%"
          slider={{ knob: 39, tick: 50 }}
          access
          tabs={
            <>
              <Nav />
              <TabSlot $w={5} />
              <ActiveTab><ActiveLabel><Fit w={154}>E5.Economic accounting</Fit></ActiveLabel></ActiveTab>
              <Rule $ml={3} $mr={15} />
              <TabSlot $w={153} $h={32} $left><Fit w={152}>E6.Environmental impact</Fit></TabSlot>
              <TabSlot $w={29}><Ellipsis /></TabSlot>
              <TabSlot $w={37}><Plus /></TabSlot>
              <TabSlot $w={28}><VDots /></TabSlot>
              <TabSlot $w={6} />
              <HTrack $w={309}><Arrow /><HThumb $w={195} $ml={19} /><Arrow flip /></HTrack>
            </>
          }
        />
      </Desktop>
    </>
  );
}
